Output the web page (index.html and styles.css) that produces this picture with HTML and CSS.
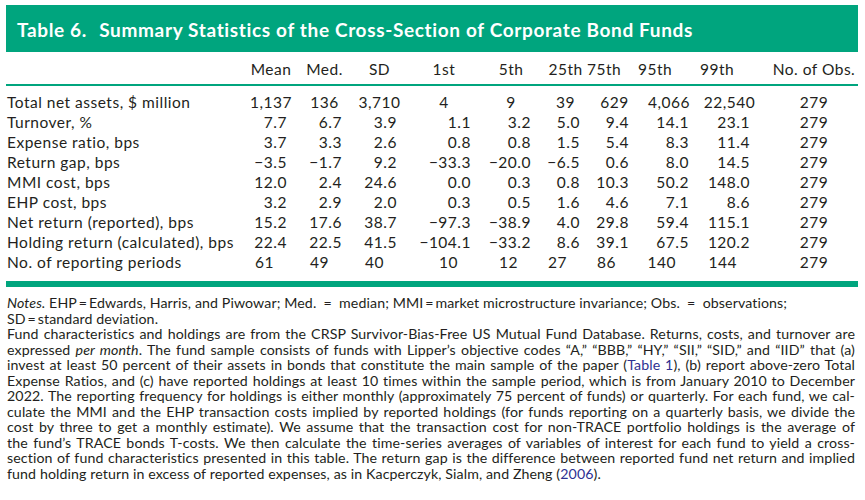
FILE: index.html
```html
<!DOCTYPE html>
<html lang="en">
<head>
<meta charset="utf-8">
<title>Table 6</title>
<link rel="stylesheet" href="styles.css">
</head>
<body>
<div class="card">
  <div class="banner"><span class="tno">Table 6.</span> Summary Statistics of the Cross-Section of Corporate Bond Funds</div>

  <div class="stats">
    <div class="grid thead">
      <span></span>
      <span>Mean</span><span>Med.</span><span>SD</span><span>1st</span><span>5th</span><span>25th</span>
      <span class="hd-75">75th</span><span class="hd-95">95th</span><span class="hd-99">99th</span><span>No. of Obs.</span>
    </div>
    <div class="tbody">
      <div class="grid row row-first">
        <span>Total net assets, $ million</span>
        <span>1,137</span><span>136</span><span>3,710</span><span>4</span><span>9</span><span>39</span><span>629</span><span>4,066</span><span>22,540</span><span>279</span>
      </div>
      <div class="grid row">
        <span>Turnover, %</span>
        <span>7.7</span><span>6.7</span><span>3.9</span><span>1.1</span><span>3.2</span><span>5.0</span><span>9.4</span><span>14.1</span><span>23.1</span><span>279</span>
      </div>
      <div class="grid row">
        <span>Expense ratio, bps</span>
        <span>3.7</span><span>3.3</span><span>2.6</span><span>0.8</span><span>0.8</span><span>1.5</span><span>5.4</span><span>8.3</span><span>11.4</span><span>279</span>
      </div>
      <div class="grid row">
        <span>Return gap, bps</span>
        <span>−3.5</span><span>−1.7</span><span>9.2</span><span>−33.3</span><span>−20.0</span><span>−6.5</span><span>0.6</span><span>8.0</span><span>14.5</span><span>279</span>
      </div>
      <div class="grid row">
        <span>MMI cost, bps</span>
        <span>12.0</span><span>2.4</span><span>24.6</span><span>0.0</span><span>0.3</span><span>0.8</span><span>10.3</span><span>50.2</span><span>148.0</span><span>279</span>
      </div>
      <div class="grid row">
        <span>EHP cost, bps</span>
        <span>3.2</span><span>2.9</span><span>2.0</span><span>0.3</span><span>0.5</span><span>1.6</span><span>4.6</span><span>7.1</span><span>8.6</span><span>279</span>
      </div>
      <div class="grid row">
        <span>Net return (reported), bps</span>
        <span>15.2</span><span>17.6</span><span>38.7</span><span>−97.3</span><span>−38.9</span><span>4.0</span><span>29.8</span><span>59.4</span><span>115.1</span><span>279</span>
      </div>
      <div class="grid row">
        <span>Holding return (calculated), bps</span>
        <span>22.4</span><span>22.5</span><span>41.5</span><span>−104.1</span><span>−33.2</span><span>8.6</span><span>39.1</span><span>67.5</span><span>120.2</span><span>279</span>
      </div>
      <div class="grid row row-last">
        <span>No. of reporting periods</span>
        <span>61</span><span>49</span><span>40</span><span>10</span><span>12</span><span>27</span><span>86</span><span>140</span><span>144</span><span>279</span>
      </div>
    </div>
  </div>

  <div class="notes">
    <span class="ln-end"><i>Notes.</i> EHP&#8201;=&#8201;Edwards, Harris, and Piwowar; Med.&ensp;=&ensp;median; MMI&#8201;=&#8201;market microstructure invariance; Obs.&ensp;=&ensp;observations;</span>
    <span class="ln-end">SD&#8201;=&#8201;standard deviation.</span>
    <span class="ln">Fund characteristics and holdings are from the CRSP Survivor-Bias-Free US Mutual Fund Database. Returns, costs, and turnover are</span>
    <span class="ln">expressed <i>per month</i>. The fund sample consists of funds with Lipper’s objective codes “A,” “BBB,” “HY,” “SII,” “SID,” and “IID” that (a)</span>
    <span class="ln">invest at least 50 percent of their assets in bonds that constitute the main sample of the paper (<a class="ref" href="#t1">Table 1</a>), (b) report above-zero Total</span>
    <span class="ln">Expense Ratios, and (c) have reported holdings at least 10 times within the sample period, which is from January 2010 to December</span>
    <span class="ln">2022. The reporting frequency for holdings is either monthly (approximately 75 percent of funds) or quarterly. For each fund, we cal-</span>
    <span class="ln">culate the MMI and the EHP transaction costs implied by reported holdings (for funds reporting on a quarterly basis, we divide the</span>
    <span class="ln">cost by three to get a monthly estimate). We assume that the transaction cost for non-TRACE portfolio holdings is the average of</span>
    <span class="ln">the fund’s TRACE bonds T-costs. We then calculate the time-series averages of variables of interest for each fund to yield a cross-</span>
    <span class="ln">section of fund characteristics presented in this table. The return gap is the difference between reported fund net return and implied</span>
    <span class="ln-end">fund holding return in excess of reported expenses, as in Kacperczyk, Sialm, and Zheng (<a class="ref" href="#k2006">2006</a>).</span>
  </div>
</div>
</body>
</html>
```

FILE: styles.css
```css
body {
  margin: 5px 7px 0 6px;
  background: #ffffff;
  color: #231f20;
  font-family: Lato, "Noto Sans", sans-serif;
}

.card {
  width: 852px;
}

.banner {
  box-sizing: border-box;
  height: 47px;
  padding: 14px 11px 0;
  background: #00a57e;
  color: #ffffff;
  font-size: 19px;
  font-weight: 700;
  letter-spacing: 0.65px;
  line-height: 22px;
  white-space: nowrap;
}

.tno {
  margin-right: 7px;
}

.stats {
  font-size: 15.5px;
  letter-spacing: 0.5px;
  line-height: 20px;
}

.grid {
  display: grid;
  grid-template-columns: 228px 32px 35px 35px 54px 40px 29px 29px 40px 41px 88px;
  column-gap: 20px;
  white-space: nowrap;
}

.thead {
  margin-top: 7px;
  padding: 0 0 5px 1px;
  border-bottom: 2px solid #00a57e;
}

.thead > span {
  justify-self: center;
}

.thead > .hd-75 {
  margin-right: 21px;
}

.thead > .hd-95 {
  margin-right: 28px;
}

.thead > .hd-99 {
  margin-right: 25px;
}

.tbody {
  padding: 6px 0 9px 1px;
  border-bottom: 6px solid #00a57e;
}

.row > span {
  justify-self: end;
}

.row > span:first-child {
  justify-self: start;
}

.row > span:last-child,
.row-first > span {
  justify-self: center;
}

.row-first > span:first-child {
  justify-self: start;
}

.row-last > span {
  margin-right: 13px;
}

.row-last > span:first-child,
.row-last > span:last-child {
  margin-right: 0;
}

.notes {
  margin-top: 8px;
  padding: 0 3px 0 1px;
  font-size: 14.2px;
  letter-spacing: 0.1px;
  line-height: 15.5px;
}

.ln {
  display: block;
  text-align: justify;
  text-align-last: justify;
  white-space: nowrap;
}

.ln-end {
  display: block;
  white-space: nowrap;
}

.ref {
  color: #2e3192;
  text-decoration: none;
}
```
